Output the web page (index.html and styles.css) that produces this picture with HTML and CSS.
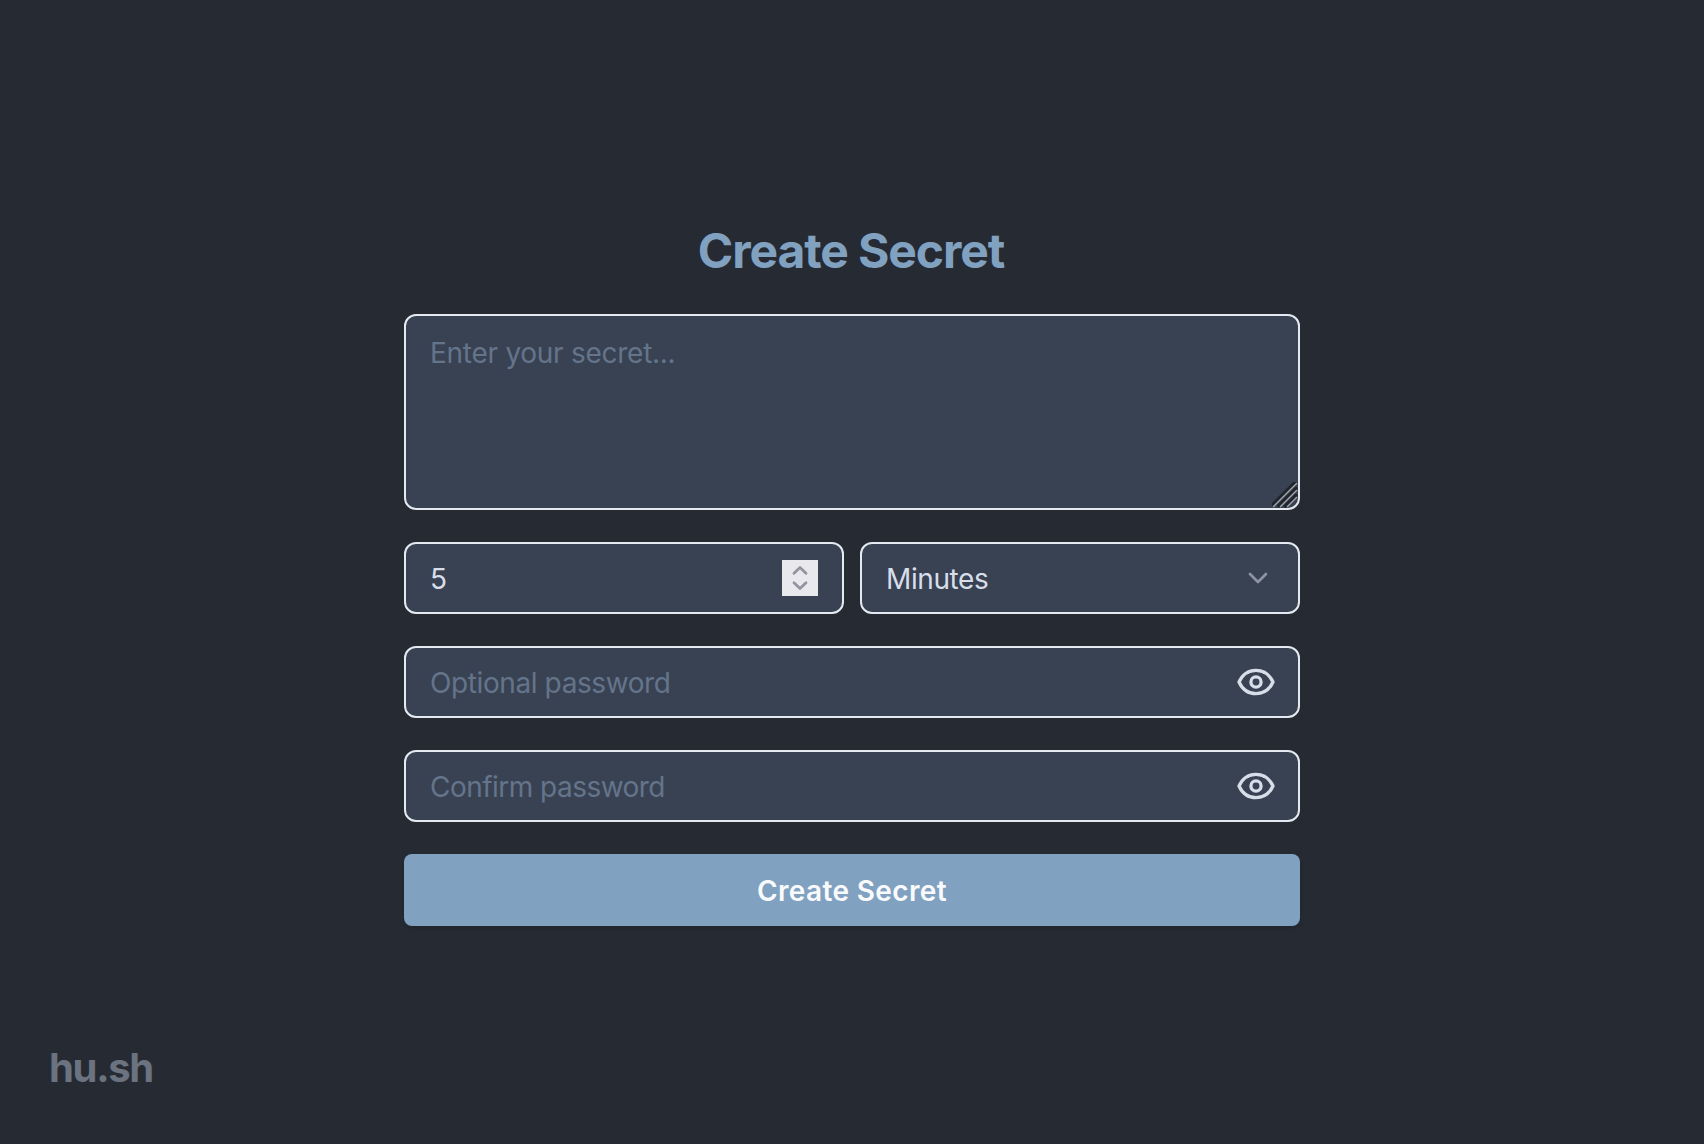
FILE: index.html
```html
<!DOCTYPE html>
<html lang="en">
<head>
<meta charset="utf-8">
<title>hu.sh</title>
<link rel="stylesheet" href="styles.css">
</head>
<body>
<main class="page">
  <h1 class="title">Create Secret</h1>
  <form class="form">
    <div class="field">
      <textarea class="control control-area" placeholder="Enter your secret..." aria-label="Secret"></textarea>
      <svg class="grip" viewBox="0 0 26 26" aria-hidden="true">
        <path class="grip-dark" d="M0 23.500 23.500 0M6.800 23.800 24 6.600M13.500 24 24 13.500"/>
        <path class="grip-light" d="M1 25 25 1M8 25 25 8M15 25 25 15"/>
      </svg>
    </div>
    <div class="row">
      <div class="box">
        <input class="box-input" type="text" value="5" aria-label="Lifetime">
        <span class="stepper">
          <svg viewBox="0 0 36 36" aria-hidden="true"><path d="M12 13.200 18 7.400 24 13.200M12 22.800 18 28.600 24 22.800"/></svg>
        </span>
      </div>
      <div class="box">
        <span class="box-text">Minutes</span>
        <svg class="chevron" viewBox="0 0 20 12" aria-hidden="true"><path d="M2 2 10 10 18 2"/></svg>
      </div>
    </div>
    <div class="box">
      <input class="box-input" type="password" placeholder="Optional password" aria-label="Password">
      <svg class="eye" viewBox="0 0 40 40" aria-hidden="true"><path d="M3 20C6.200 13 12.400 8.300 20 8.300S33.800 13 37 20C33.800 27 27.600 31.700 20 31.700S6.200 27 3 20Z"/><circle cx="20" cy="20" r="5.100"/></svg>
    </div>
    <div class="box">
      <input class="box-input box-input-tight" type="password" placeholder="Confirm password" aria-label="Confirm password">
      <svg class="eye" viewBox="0 0 40 40" aria-hidden="true"><path d="M3 20C6.200 13 12.400 8.300 20 8.300S33.800 13 37 20C33.800 27 27.600 31.700 20 31.700S6.200 27 3 20Z"/><circle cx="20" cy="20" r="5.100"/></svg>
    </div>
    <button class="submit" type="button">Create Secret</button>
  </form>
</main>
<footer class="brand">hu.sh</footer>
</body>
</html>
```

FILE: styles.css
```css
* { box-sizing: border-box; }

body {
  margin: 0;
  height: 1144px;
  display: flex;
  flex-direction: column;
  justify-content: space-between;
  overflow: hidden;
  background: #262b33;
  color: #d8dee9;
  font-family: Inter, "Liberation Sans", sans-serif;
  font-size: 28px;
}

.page {
  width: 896px;
  margin: 0 auto;
  padding-top: 221px;
}

.title {
  margin: 0 0 33px;
  padding-right: 2px;
  color: #81a1c1;
  font-size: 48px;
  font-weight: 700;
  line-height: 60px;
  letter-spacing: -1.1px;
  text-align: center;
}

.form {
  display: flex;
  flex-direction: column;
  gap: 32px;
}

.field { position: relative; height: 196px; }

.control, .box {
  border: 2px solid #e5e9f0;
  border-radius: 12px;
  background: #394252;
}

.control-area {
  display: block;
  width: 100%;
  height: 100%;
  padding: 17px 24px;
  resize: none;
  outline: 0;
  color: inherit;
  font: inherit;
  line-height: 40px;
  letter-spacing: -0.27px;
}

::placeholder { color: #64748b; opacity: 1; }

.grip {
  position: absolute;
  right: 2px;
  bottom: 2px;
  width: 26px;
  height: 26px;
  fill: none;
}
.grip-dark { stroke: #1f242d; stroke-width: 3.4; stroke-linecap: round; }
.grip-light { stroke: #a2a6ad; stroke-width: 1.4; }

.row {
  display: grid;
  grid-template-columns: repeat(2, minmax(0, 1fr));
  gap: 16px;
}

.box {
  display: flex;
  align-items: center;
  justify-content: space-between;
  height: 72px;
  padding: 0 24px;
}

.box-input {
  flex: 1;
  min-width: 0;
  height: 68px;
  padding: 2px 0 0;
  border: 0;
  outline: 0;
  background: none;
  color: inherit;
  font: inherit;
  letter-spacing: -0.4px;
}
.box-input-tight { letter-spacing: -0.53px; }

.box-text { padding-top: 2px; letter-spacing: -0.4px; }

.stepper {
  width: 36px;
  height: 36px;
  background: #e9e9ed;
}
.stepper svg {
  display: block;
  fill: none;
  stroke: #9493a0;
  stroke-width: 2.8;
  stroke-linecap: round;
  stroke-linejoin: round;
}

.chevron {
  width: 20px;
  height: 12px;
  margin-right: 6px;
  fill: none;
  stroke: #8c93a1;
  stroke-width: 2.7;
  stroke-linecap: round;
  stroke-linejoin: round;
}

.eye {
  width: 40px;
  height: 40px;
  margin-right: -2px;
  fill: none;
  stroke: #d8dee9;
  stroke-width: 3.3;
  stroke-linejoin: round;
}

.submit {
  height: 72px;
  padding: 2px 0 0;
  border: 0;
  border-radius: 8px;
  background: #81a1c1;
  color: #f8fafc;
  font: inherit;
  font-weight: 600;
  letter-spacing: 0.36px;
  box-shadow: 0 2px 4px rgba(0, 0, 0, 0.15);
}

.brand {
  padding: 0 49px 51px;
  color: #6b7280;
  font-size: 40px;
  font-weight: 700;
  line-height: 50px;
  letter-spacing: -1.3px;
}
```
